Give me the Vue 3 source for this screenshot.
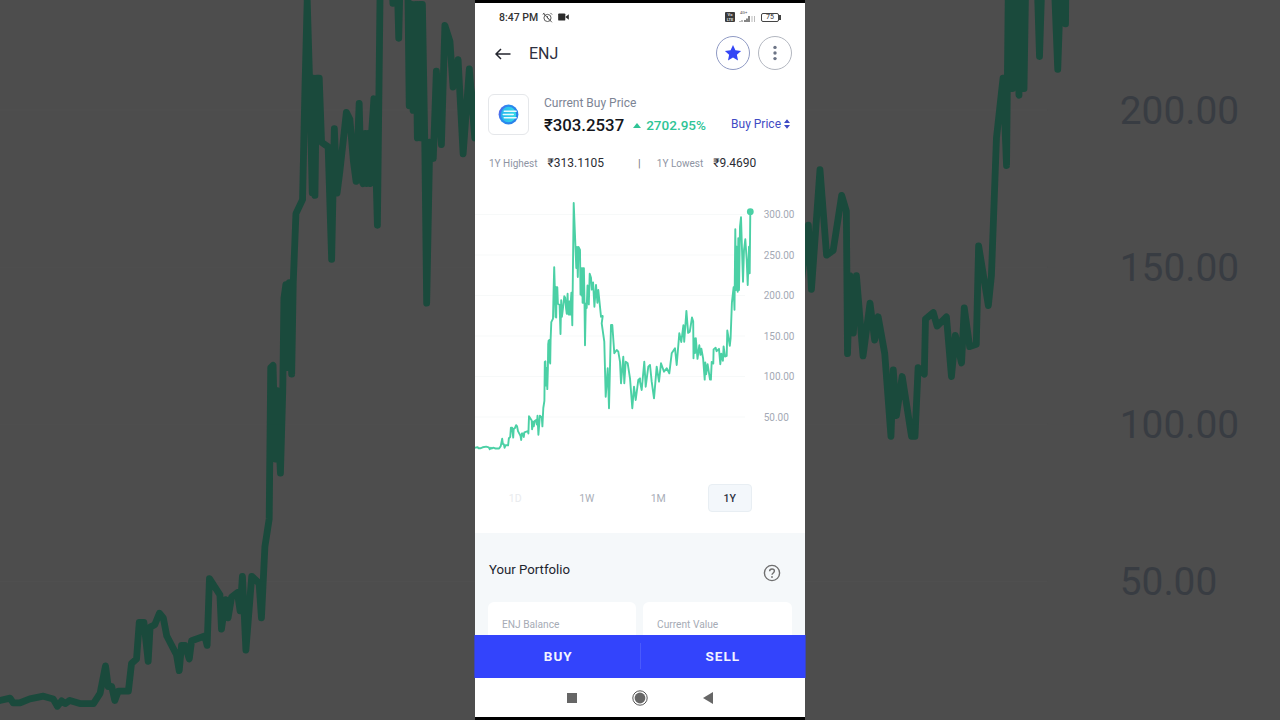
<script setup>
// Chart trace. The background is the same chart, enlarged, so one path feeds both.
const fromLeft = ([x, y]) => [475 + x / 11.64, 267.14 + y / 8.446]
const fromRight = ([x, y]) => [682.5 + x / 11.64, 267.14 + y / 8.446]
const fromTop = ([x, y]) => [475 + x / 3, 190 + y / 3]
const fromLow = ([x, y]) => [475 + x / 3, 320 + y / 3]
const fromLowMid = ([x, y]) => [640 + x / 3, 320 + y / 3]
const fromTopMid = ([x, y]) => [640 + x / 3, 190 + y / 3]

const points = [
  ...[[0,1525],[30,1520],[40,1530],[60,1530],[90,1522],[130,1516],[160,1522],[172,1538],[185,1526],[195,1532],[210,1525],[240,1532],[280,1532],[300,1510],[317,1450],[325,1495],[335,1495],[345,1525],[355,1505],[385,1505],[395,1445],[410,1435],[418,1355],[432,1355],[445,1440],[450,1365],[465,1360],[478,1335],[490,1345],[500,1385],[530,1425],[538,1460],[545,1405],[555,1405],[568,1435],[575,1395],[615,1385],[622,1405],[628,1260],[660,1295],[665,1370],[678,1305],[685,1345],[695,1300],[712,1290],[720,1330],[728,1255],[738,1415],[755,1255],[778,1270],[785,1345],[795,1190],[808,1130],[812,800],[820,795],[826,1000],[830,850],[842,1030],[848,850],[852,650],[858,620],[862,800],[868,615],[875,815],[880,615],[888,465],[908,435],[915,200],[922,0],[930,200],[937,420],[940,170],[945,425],[950,170],[958,170],[965,310],[985,320],[995,565],[1003,280],[1012,420],[1020,375],[1040,245],[1050,260],[1060,350],[1068,395],[1078,225],[1084,390],[1090,400],[1096,290],[1100,400],[1105,290],[1110,400],[1115,290],[1122,215],[1132,490]].map(fromLeft),
  [573.7,203],[575.5,248],[576.3,268],[577,247],[577.8,277],[578.5,247],[580,250],
  ...[[1228,230],[1236,10],[1240,240],[1248,10],[1252,300],[1258,10],[1264,300],[1268,10],[1274,300],[1280,660],[1290,310],[1300,345],[1310,155],[1325,315],[1335,55],[1350,90],[1360,190],[1375,130],[1390,335],[1408,150],[1425,300]].map(fromLeft),
  ...[[370,300],[378,380],[383,378]].map(fromTop),
  ...[[380,10],[388,65],[392,230],[398,145],[402,265],[408,15],[412,15],[418,100],[425,90],[430,95],[435,125],[438,190],[445,110],[448,190],[452,125],[458,130],[465,175],[472,265],[477,200],[482,240],[490,180],[495,175]].map(fromLow),
  ...[[0,185],[5,210],[13,125],[17,200],[25,140],[30,135],[35,185],[42,235],[50,140],[57,185],[63,130],[72,155],[80,145],[88,160],[95,100],[105,85],[110,135],[118,40],[124,66]].map(fromLowMid),
  ...[[10,490],[20,630],[45,370],[65,555],[85,545],[110,425],[125,460],[128,770],[135,600],[145,725],[155,600],[175,775],[195,660],[210,740],[220,690],[240,770],[258,950],[265,805],[275,905],[292,820],[320,950],[330,950],[340,800],[358,815],[362,695],[385,680],[397,710],[425,690],[440,820],[452,730],[470,790],[478,670],[495,755],[515,750],[522,535],[550,665],[560,600],[575,300],[595,170],[605,360]].map(fromRight),
  ...[[286,118],[288,300],[290,170],[293,305],[295,145],[297,300],[300,110],[303,82],[309,275],[312,180],[316,148],[320,210],[323,285],[327,170],[329,250],[331,65]].map(fromTopMid),
]
const chartLine = points.map(([x, y]) => `${x.toFixed(1)},${y.toFixed(1)}`).join(' ')

const axis = [
  { y: 214.5, label: '300.00' },
  { y: 255, label: '250.00' },
  { y: 295.5, label: '200.00' },
  { y: 336, label: '150.00' },
  { y: 376.5, label: '100.00' },
  { y: 417, label: '50.00' },
]
const backdropAxis = axis.slice(2)
const tabs = [
  { label: '1D', state: 'off' },
  { label: '1W', state: '' },
  { label: '1M', state: '' },
  { label: '1Y', state: 'on' },
]
</script>

<template>
  <div class="stage">
    <svg class="backdrop" viewBox="475 267.14 330 185.6" preserveAspectRatio="none">
      <line v-for="a in backdropAxis" :key="a.y" x1="475" x2="745" :y1="a.y" :y2="a.y" class="bg-grid" />
      <polyline :points="chartLine" class="bg-line" />
      <text v-for="a in backdropAxis" :key="a.y" x="763.7" :y="a.y + 3.5" class="bg-label">{{ a.label }}</text>
    </svg>

    <div class="phone">
      <div class="status">
        <span class="time">8:47 PM</span>
        <svg class="st-alarm" viewBox="0 0 12 12" width="11" height="11">
          <circle cx="6" cy="6.5" r="3.9" fill="none" stroke="#4a4a4a" stroke-width="1" />
          <path d="M6 4.5V6.6L7.4 7.6M1 2.8 2.8 1M11 2.8 9.2 1M1.2 1.2 10.8 11.2" fill="none" stroke="#4a4a4a" stroke-width="1" />
        </svg>
        <svg class="st-video" viewBox="0 0 12 9" width="11" height="8">
          <rect x="0" y="0.5" width="8" height="8" rx="1" fill="#2b2b2b" />
          <path d="M8 4.5 12 1.5V7.5Z" fill="#2b2b2b" />
        </svg>
        <span class="st-fill"></span>
        <span class="volte">Vo<br />LTE</span>
        <span class="signal">
          <span class="sig-text">4G+</span>
          <svg viewBox="0 0 17 8" width="17" height="8">
            <path d="M1 7V6M3 7V5" stroke="#777" stroke-width="1" />
            <path d="M6 7V5M8 7V3.5M10 7V1" stroke="#333" stroke-width="1.2" />
            <path d="M13 7V1M15.5 7V1" stroke="#bbb" stroke-width="1" />
          </svg>
        </span>
        <span class="battery"><span>75</span></span>
      </div>

      <header class="top">
        <svg class="back" viewBox="0 0 16 12" width="16" height="12">
          <path d="M15.5 6H1M6 1 1 6l5 5" fill="none" stroke="#23252e" stroke-width="1.5" />
        </svg>
        <span class="title">ENJ</span>
        <span class="top-fill"></span>
        <button class="round fav">
          <svg viewBox="0 0 20 20" width="18" height="18">
            <path d="M10 1.2 12.7 7l6.3.7-4.7 4.3 1.3 6.3L10 15.1l-5.6 3.2L5.7 12 1 7.7 7.3 7Z" fill="#3446f5" />
          </svg>
        </button>
        <button class="round more">
          <svg viewBox="0 0 4 16" width="4" height="16">
            <circle cx="2" cy="2.4" r="1.7" fill="#6c7486" />
            <circle cx="2" cy="8" r="1.7" fill="#6c7486" />
            <circle cx="2" cy="13.6" r="1.7" fill="#6c7486" />
          </svg>
        </button>
      </header>

      <section class="coin">
        <div class="logo">
          <svg viewBox="0 0 22 22" width="21" height="21">
            <defs>
              <linearGradient id="enj" x1="0" y1="0" x2="1" y2="0.4">
                <stop offset="0" stop-color="#6a52e6" />
                <stop offset="0.4" stop-color="#2a8ef0" />
                <stop offset="1" stop-color="#2a7fe8" />
              </linearGradient>
              <linearGradient id="enj-core" x1="0" y1="0" x2="1" y2="0">
                <stop offset="0" stop-color="#28b4ee" />
                <stop offset="1" stop-color="#35dbe6" />
              </linearGradient>
            </defs>
            <circle cx="11" cy="11" r="10.4" fill="url(#enj)" />
            <circle cx="11" cy="11" r="8" fill="url(#enj-core)" />
            <path d="M6.5 7.6H19M5.5 11H16M6.5 14.4H19" stroke="#eafafd" stroke-width="1.5" stroke-linecap="round" />
          </svg>
        </div>
        <div class="price">
          <div class="price-label">Current Buy Price</div>
          <div class="price-row">
            <span class="price-value">₹303.2537</span>
            <span class="tri"></span>
            <span class="change">2702.95%</span>
            <span class="buy-toggle">Buy Price
              <svg viewBox="0 0 7 11" width="6" height="10">
                <path d="M3.5 0 7 4.4H0ZM3.5 11 0 6.6H7Z" fill="#3f4bc4" />
              </svg>
            </span>
          </div>
        </div>
      </section>

      <section class="stats">
        <span class="st-label">1Y Highest</span>
        <span class="st-value">₹313.1105</span>
        <span class="st-sep">|</span>
        <span class="st-label low">1Y Lowest</span>
        <span class="st-value">₹9.4690</span>
      </section>

      <svg class="chart" viewBox="475 190 330 270" width="330" height="270">
        <line v-for="a in axis" :key="a.y" x1="475" x2="745" :y1="a.y" :y2="a.y" class="grid" />
        <polyline :points="chartLine" class="line" />
        <circle cx="750.3" cy="211.7" r="3.4" class="dot" />
        <text v-for="a in axis" :key="a.y" x="763.7" :y="a.y + 3.5" class="axis-label">{{ a.label }}</text>
      </svg>

      <nav class="tabs">
        <span v-for="t in tabs" :key="t.label" class="tab" :class="t.state">{{ t.label }}</span>
      </nav>

      <section class="portfolio">
        <div class="pf-head">
          <span class="pf-title">Your Portfolio</span>
          <svg class="pf-help" viewBox="0 0 18 18" width="18" height="18">
            <circle cx="9" cy="9" r="7.6" fill="none" stroke="#6f6f6f" stroke-width="1.4" />
            <path d="M6.6 7.2C6.6 5.8 7.7 5 9 5s2.4.9 2.4 2.1c0 1.8-2.4 1.9-2.4 3.7" fill="none" stroke="#6f6f6f" stroke-width="1.4" />
            <circle cx="9" cy="13" r="0.9" fill="#6f6f6f" />
          </svg>
        </div>
        <div class="pf-cards">
          <div class="pf-card">ENJ Balance</div>
          <div class="pf-card">Current Value</div>
        </div>
      </section>

      <div class="actions">
        <span class="act">BUY</span>
        <span class="act-div"></span>
        <span class="act">SELL</span>
      </div>

      <div class="nav">
        <span class="nav-square"></span>
        <svg viewBox="0 0 16 16" width="16" height="16">
          <circle cx="8" cy="8" r="7.2" fill="none" stroke="#555" stroke-width="1" />
          <circle cx="8" cy="8" r="5.4" fill="#666" />
        </svg>
        <svg viewBox="0 0 10 12" width="10" height="12">
          <path d="M0 6 10 0V12Z" fill="#666" />
        </svg>
      </div>
    </div>
  </div>
</template>

<style scoped>
.stage {
  position: relative;
  width: 1280px;
  height: 720px;
  overflow: hidden;
  background: #4d4d4d;
  font-family: Roboto, "Liberation Sans", sans-serif;
}
.backdrop {
  position: absolute;
  left: 0;
  top: 0;
  width: 1280px;
  height: 720px;
}
.bg-grid { stroke: #4f4f4f; stroke-width: 0.25; }
.bg-line {
  fill: none;
  stroke: #1a4a3c;
  stroke-width: 1.75;
  stroke-linejoin: round;
  stroke-linecap: round;
}
.bg-label { fill: #383c42; font-size: 10px; font-family: Roboto, sans-serif; }

.phone {
  position: relative;
  width: 330px;
  height: 720px;
  margin: 0 auto;
  box-sizing: border-box;
  display: flex;
  flex-direction: column;
  background: #fff;
  border-top: 3px solid #000;
  border-bottom: 3px solid #000;
}

.status {
  height: 28px;
  flex: none;
  display: flex;
  align-items: center;
  padding: 0 26px 0 24px;
  color: #333;
}
.time { font-size: 10.5px; font-weight: 500; }
.st-alarm { margin-left: 4px; }
.st-video { margin-left: 5px; }
.st-fill { flex: 1; }
.volte {
  width: 10px;
  height: 10px;
  background: #3a3a3a;
  color: #ddd;
  border-radius: 1px;
  font-size: 4px;
  line-height: 5px;
  text-align: center;
  font-weight: 700;
}
.signal { position: relative; margin-left: 4px; width: 17px; height: 11px; display: block; }
.signal svg { position: absolute; left: 0; bottom: 0; }
.sig-text { position: absolute; left: 1px; top: -2px; font-size: 4px; color: #555; line-height: 5px; }
.battery {
  position: relative;
  margin-left: 5px;
  width: 18px;
  height: 9px;
  box-sizing: border-box;
  border: 1px solid #444;
  border-radius: 2px;
  display: flex;
  align-items: center;
  justify-content: center;
  font-size: 7px;
  color: #333;
}
.battery::after {
  content: "";
  position: absolute;
  right: -3px;
  top: 1px;
  width: 2px;
  height: 5px;
  background: #444;
}

.top {
  height: 44px;
  flex: none;
  display: flex;
  align-items: center;
  padding: 0 13px 0 20px;
  box-sizing: border-box;
}
.back { margin-top: 1px; }
.title { margin-left: 18px; margin-top: 1px; font-size: 16px; color: #2e3040; }
.top-fill { flex: 1; }
.round {
  width: 34px;
  height: 34px;
  padding: 0;
  border-radius: 50%;
  background: #fff;
  display: flex;
  align-items: center;
  justify-content: center;
}
.fav { border: 1px solid #8f9ac4; }
.more { border: 1px solid #b3b7c0; margin-left: 8px; }

.coin {
  margin-top: 19px;
  height: 41px;
  flex: none;
  display: flex;
  padding-left: 13px;
}
.logo {
  width: 41px;
  height: 41px;
  box-sizing: border-box;
  border: 1px solid #e5e7ea;
  border-radius: 6px;
  display: flex;
  align-items: center;
  justify-content: center;
}
.price { margin-left: 15px; flex: 1; padding-right: 15px; }
.price-label { font-size: 12px; color: #7d8494; line-height: 18px; }
.price-row { display: flex; align-items: center; height: 26px; }
.price-value { font-size: 16.8px; font-weight: 500; color: #14161c; }
.tri {
  margin-left: 9px;
  width: 0;
  height: 0;
  border-left: 4.5px solid transparent;
  border-right: 4.5px solid transparent;
  border-bottom: 5.5px solid #2fc496;
}
.change { margin-left: 5px; font-size: 13.5px; font-weight: 500; color: #2fc496; }
.buy-toggle {
  margin-left: auto;
  margin-top: -3px;
  font-size: 12px;
  color: #3f4bc4;
  display: flex;
  align-items: center;
  gap: 3px;
}

.stats {
  margin-top: 20px;
  height: 16px;
  flex: none;
  display: flex;
  align-items: center;
  padding-left: 14px;
}
.st-label { font-size: 10px; color: #8e94a3; }
.st-value { font-size: 12px; color: #2a2c33; margin-left: 10px; }
.st-sep { margin-left: 34px; font-size: 11px; color: #777; }
.low { margin-left: 16px; }

.chart { margin-top: 19px; flex: none; display: block; }
.grid { stroke: #f7f9f9; stroke-width: 1; }
.line {
  fill: none;
  stroke: #4bd0a5;
  stroke-width: 1.9;
  stroke-linejoin: round;
}
.dot { fill: #4bd0a5; }
.axis-label { fill: #a4a9b5; font-size: 10px; font-family: Roboto, sans-serif; }

.tabs {
  margin-top: 24px;
  height: 28px;
  flex: none;
  display: grid;
  grid-template-columns: repeat(4, 44.5px);
  column-gap: 27px;
  padding-left: 18px;
}
.tab {
  display: flex;
  align-items: center;
  justify-content: center;
  font-size: 10.5px;
  color: #a9aeb8;
  box-sizing: border-box;
  border-radius: 4px;
}
.tab.off { color: #e9ebee; }
.tab.on {
  background: #f3f7fb;
  border: 1px solid #e8eef3;
  color: #2a3040;
  font-weight: 500;
}

.portfolio {
  margin-top: 21px;
  flex: 1;
  min-height: 0;
  overflow: hidden;
  background: #f5f8fa;
  padding: 0 13px;
}
.pf-head {
  height: 69px;
  display: flex;
  justify-content: space-between;
  align-items: flex-start;
  padding: 30px 11px 0 1px;
  box-sizing: border-box;
}
.pf-title { font-size: 13.2px; color: #22252e; line-height: 14px; }
.pf-help { margin-top: 1px; }
.pf-cards { display: grid; grid-template-columns: 148px 149px; column-gap: 7px; }
.pf-card {
  height: 80px;
  background: #fff;
  border-radius: 6px;
  padding: 17px 14px;
  box-sizing: border-box;
  font-size: 10.2px;
  line-height: 12px;
  color: #a6abb5;
}

.actions {
  height: 43px;
  flex: none;
  padding-bottom: 1px;
  box-sizing: border-box;
  display: flex;
  align-items: center;
  background: #3344fc;
  box-shadow: -1px 0 0 #3b46b8, 1px 0 0 #3b46b8;
}
.act {
  flex: 1;
  text-align: center;
  color: #f2f3ff;
  font-size: 13.5px;
  font-weight: 700;
  letter-spacing: 1px;
}
.act:first-child { text-indent: 2px; }
.act-div { width: 1px; height: 26px; background: #4a5afc; }

.nav {
  height: 39px;
  flex: none;
  display: flex;
  align-items: center;
  justify-content: center;
  gap: 55px;
  background: #fff;
}
.nav-square { width: 10px; height: 10px; background: #666; }
</style>
